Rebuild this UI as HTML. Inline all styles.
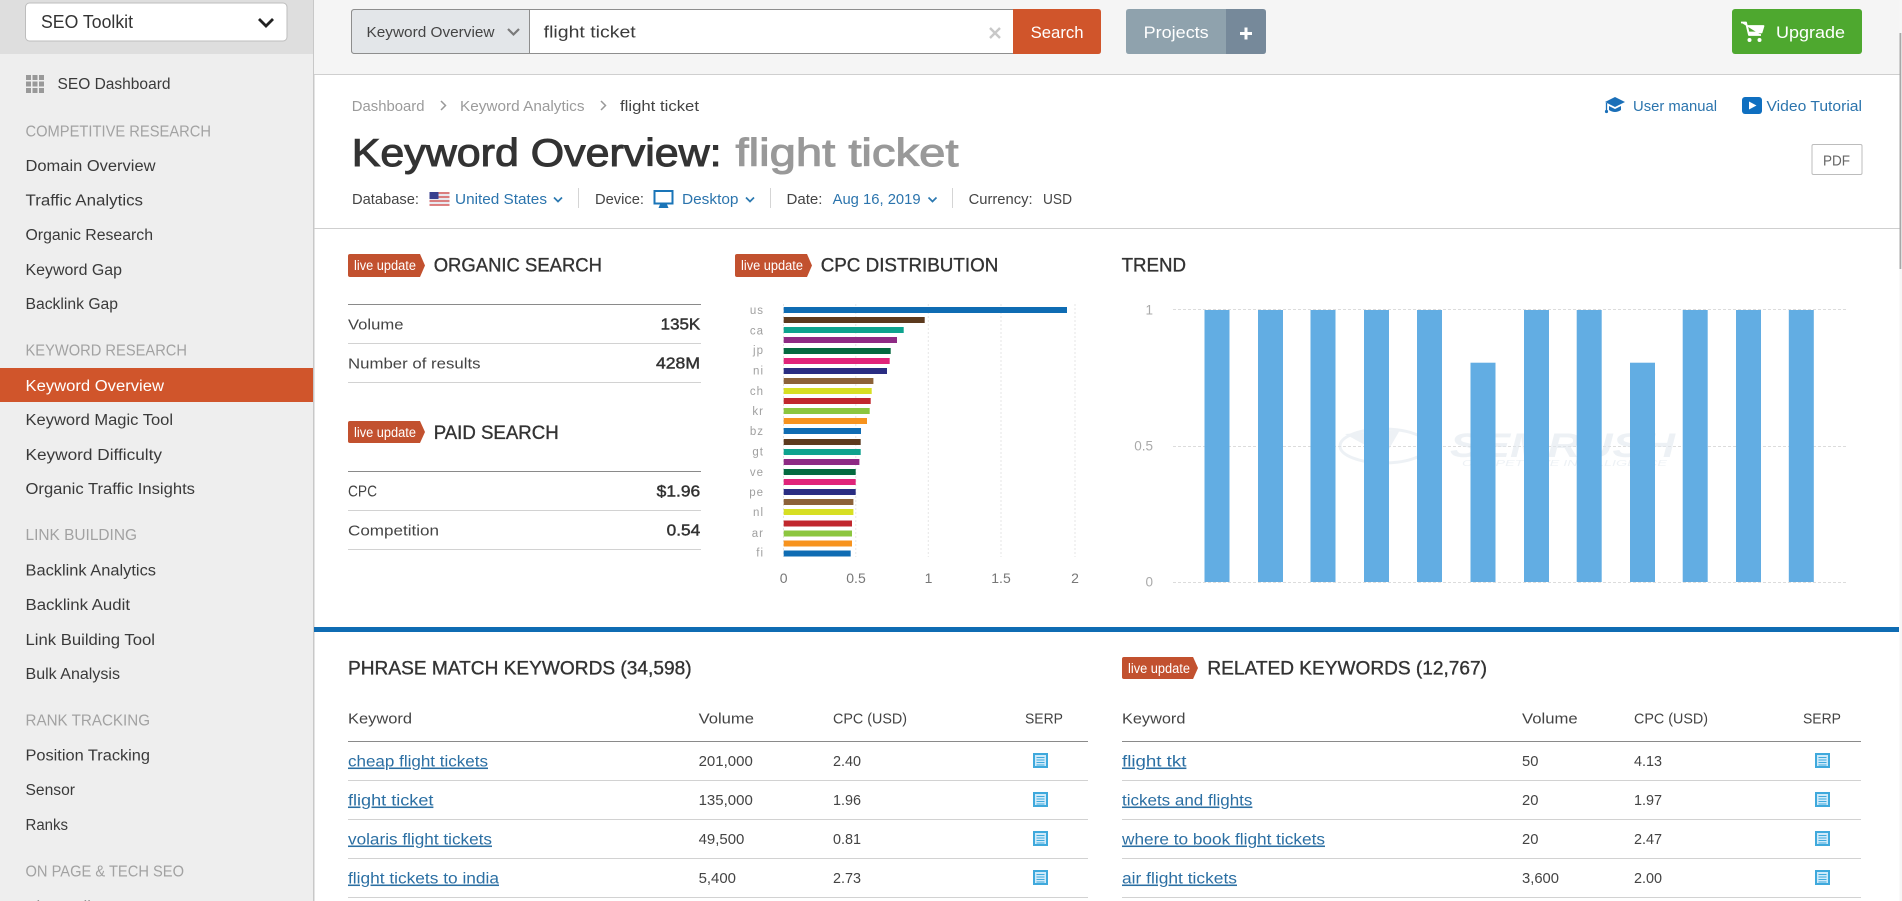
<!DOCTYPE html>
<html lang="en">
<head>
<meta charset="utf-8">
<title>Keyword Overview: flight ticket</title>
<style>
html,body{margin:0;padding:0;width:1902px;height:901px;overflow:hidden;background:#fff}
svg{display:block}
text{font-family:"Liberation Sans",sans-serif;font-size:15px;fill:#3c3c3c}
.s{font-size:15.5px;fill:#3a3a3a}
.c{font-size:15.5px;fill:#a2a2a2}
.h{font-size:19px;fill:#333;stroke:#333;stroke-width:.35px}
.l{font-size:13.5px;fill:#fff}
.g{fill:#9b9b9b}
.b{fill:#2b74ad}
.k{font-size:15px;fill:#444}
.v{font-size:15.5px;fill:#333;stroke:#333;stroke-width:.45px}
.w{fill:#fff;font-size:16.5px}
.t{font-size:39px;fill:#333;stroke:#333;stroke-width:1px}
.tg{font-size:39px;fill:#999;stroke:#999;stroke-width:1px}
.y{font-size:11.5px;fill:#a0a0a0;text-anchor:end}
.x{font-size:14px;fill:#777;text-anchor:middle}
.u{fill:#2b6fa3;text-decoration:underline;font-size:15.5px}
</style>
</head>
<body>
<svg width="1902" height="901" viewBox="0 0 1902 901" xmlns="http://www.w3.org/2000/svg">
<defs>
<symbol id="tag" viewBox="0 0 77 23" preserveAspectRatio="none"><path d="M2 0H72L77 11.500L72 23H2Q0 23 0 21V2Q0 0 2 0Z" fill="#c2512f"/></symbol>
<g id="doc"><rect x="0" y="0" width="15" height="15" fill="#3fa9dc"/><rect x="2" y="2" width="11" height="11" fill="#cfeafa"/><path d="M3.500 4.500H11.500M3.500 7H11.500M3.500 9.500H11.500M3.500 12H11.500" stroke="#3fa9dc" stroke-width="1"/></g>
<path id="chev" d="M-4 -2.500L0 1.500L4 -2.500" fill="none" stroke="#2b78b0" stroke-width="1.700"/>
</defs>

<!-- backgrounds -->
<rect width="1902" height="901" fill="#fff"/>
<rect x="0" y="0" width="313" height="901" fill="#eeeeee"/>
<rect x="0" y="0" width="313" height="54" fill="#dedede"/>
<rect x="313" y="0" width="1.500" height="901" fill="#c8c8c8"/>
<rect x="314" y="0" width="1588" height="74" fill="#f5f5f5"/>
<rect x="314" y="74" width="1586" height="1" fill="#cfcfcf"/>
<rect x="314" y="228" width="1586" height="1" fill="#cfcfcf"/>
<rect x="1899.500" y="0" width="2.500" height="901" fill="#f6f6f6"/>
<rect x="1899.500" y="33" width="1.800" height="236" fill="#a8a8a8"/>

<!-- sidebar -->
<rect x="25.500" y="3" width="261.500" height="38" rx="4" fill="#fff" stroke="#bdbdbd"/>
<text x="41" y="28" style="font-size:18px;fill:#333" textLength="92" lengthAdjust="spacingAndGlyphs">SEO Toolkit</text>
<path d="M259 19L266 26L273 19" fill="none" stroke="#222" stroke-width="2.800"/>
<g fill="#999">
<rect x="26" y="75" width="5" height="5"/><rect x="32.500" y="75" width="5" height="5"/><rect x="39" y="75" width="5" height="5"/>
<rect x="26" y="81.500" width="5" height="5"/><rect x="32.500" y="81.500" width="5" height="5"/><rect x="39" y="81.500" width="5" height="5"/>
<rect x="26" y="88" width="5" height="5"/><rect x="32.500" y="88" width="5" height="5"/><rect x="39" y="88" width="5" height="5"/>
</g>
<text class="s" x="57.500" y="89" textLength="113" lengthAdjust="spacingAndGlyphs">SEO Dashboard</text>
<text class="c" x="25.500" y="136.500" textLength="185.500" lengthAdjust="spacingAndGlyphs">COMPETITIVE RESEARCH</text>
<text class="s" x="25.500" y="171" textLength="130" lengthAdjust="spacingAndGlyphs">Domain Overview</text>
<text class="s" x="25.500" y="205.500" textLength="117.500" lengthAdjust="spacingAndGlyphs">Traffic Analytics</text>
<text class="s" x="25.500" y="240" textLength="127.500" lengthAdjust="spacingAndGlyphs">Organic Research</text>
<text class="s" x="25.500" y="275" textLength="96.500" lengthAdjust="spacingAndGlyphs">Keyword Gap</text>
<text class="s" x="25.500" y="309" textLength="92.500" lengthAdjust="spacingAndGlyphs">Backlink Gap</text>
<text class="c" x="25.500" y="355.500" textLength="161.500" lengthAdjust="spacingAndGlyphs">KEYWORD RESEARCH</text>
<rect x="0" y="368" width="313" height="34" fill="#d0552b"/>
<text class="s" style="fill:#fff" x="25.500" y="391" textLength="138.500" lengthAdjust="spacingAndGlyphs">Keyword Overview</text>
<text class="s" x="25.500" y="425" textLength="147.500" lengthAdjust="spacingAndGlyphs">Keyword Magic Tool</text>
<text class="s" x="25.500" y="460" textLength="136.500" lengthAdjust="spacingAndGlyphs">Keyword Difficulty</text>
<text class="s" x="25.500" y="494" textLength="169.500" lengthAdjust="spacingAndGlyphs">Organic Traffic Insights</text>
<text class="c" x="25.500" y="540" textLength="111.500" lengthAdjust="spacingAndGlyphs">LINK BUILDING</text>
<text class="s" x="25.500" y="575.500" textLength="130.500" lengthAdjust="spacingAndGlyphs">Backlink Analytics</text>
<text class="s" x="25.500" y="610" textLength="104.500" lengthAdjust="spacingAndGlyphs">Backlink Audit</text>
<text class="s" x="25.500" y="645" textLength="129.500" lengthAdjust="spacingAndGlyphs">Link Building Tool</text>
<text class="s" x="25.500" y="679" textLength="94.500" lengthAdjust="spacingAndGlyphs">Bulk Analysis</text>
<text class="c" x="25.500" y="725.500" textLength="124.500" lengthAdjust="spacingAndGlyphs">RANK TRACKING</text>
<text class="s" x="25.500" y="760.500" textLength="124.500" lengthAdjust="spacingAndGlyphs">Position Tracking</text>
<text class="s" x="25.500" y="795" textLength="49.500" lengthAdjust="spacingAndGlyphs">Sensor</text>
<text class="s" x="25.500" y="830" textLength="42.500" lengthAdjust="spacingAndGlyphs">Ranks</text>
<text class="c" x="25.500" y="876.500" textLength="158.500" lengthAdjust="spacingAndGlyphs">ON PAGE &amp; TECH SEO</text>
<text class="s" x="25.500" y="912" textLength="70" lengthAdjust="spacingAndGlyphs">Site Audit</text>

<!-- top bar -->
<rect x="351.500" y="9.500" width="680" height="44" rx="3" fill="#fff" stroke="#8e8e8e"/>
<path d="M351.500 12.500Q351.500 9.500 354.500 9.500H529.500V53.500H354.500Q351.500 53.500 351.500 50.500Z" fill="#e3e6e9" stroke="#8e8e8e"/>
<text x="366.500" y="37" style="font-size:14.500px;fill:#444" textLength="128" lengthAdjust="spacingAndGlyphs">Keyword Overview</text>
<path d="M508 29L513.500 34.500L519 29" fill="none" stroke="#7a7a7a" stroke-width="2.200"/>
<text x="543.700" y="37.500" style="font-size:17px;fill:#3a3a3a" textLength="92" lengthAdjust="spacingAndGlyphs">flight ticket</text>
<path d="M990 28L1000 38M1000 28L990 38" stroke="#c8c8c8" stroke-width="2.400"/>
<path d="M1013 9H1098Q1101 9 1101 12V51Q1101 54 1098 54H1013Z" fill="#d0552b"/>
<text class="w" x="1030.600" y="38" textLength="53" lengthAdjust="spacingAndGlyphs">Search</text>
<path d="M1129 9H1226V54H1129Q1126 54 1126 51V12Q1126 9 1129 9Z" fill="#8fa2ad"/>
<path d="M1226 9H1263Q1266 9 1266 12V51Q1266 54 1263 54H1226Z" fill="#76899a"/>
<text class="w" x="1143.700" y="38" textLength="65" lengthAdjust="spacingAndGlyphs">Projects</text>
<path d="M1246 27.500V39.500M1240 33.500H1252" stroke="#fff" stroke-width="3"/>
<rect x="1732" y="9" width="130" height="45" rx="3" fill="#4ea82f"/>
<path d="M1741 22.500H1746L1749 35H1761M1747 26H1763.500L1761.500 32.500H1748.500Z" fill="#fff" stroke="#fff" stroke-width="1.800" stroke-linejoin="round"/>
<circle cx="1749.500" cy="40" r="2" fill="#fff"/><circle cx="1759.500" cy="40" r="2" fill="#fff"/>
<text class="w" x="1776" y="38" textLength="69" lengthAdjust="spacingAndGlyphs">Upgrade</text>

<!-- page head -->
<text class="g" x="351.800" y="111" style="font-size:14.500px" textLength="72.700" lengthAdjust="spacingAndGlyphs">Dashboard</text>
<path d="M441 101L445.500 105.500L441 110" fill="none" stroke="#999" stroke-width="1.500"/>
<text class="g" x="460" y="111" style="font-size:14.500px" textLength="124.500" lengthAdjust="spacingAndGlyphs">Keyword Analytics</text>
<path d="M601 101L605.500 105.500L601 110" fill="none" stroke="#999" stroke-width="1.500"/>
<text x="620" y="111" style="font-size:14.500px;fill:#444" textLength="79" lengthAdjust="spacingAndGlyphs">flight ticket</text>
<text class="t" x="351.800" y="166" textLength="369.800" lengthAdjust="spacingAndGlyphs">Keyword Overview:</text>
<text class="tg" x="735.500" y="166" textLength="223" lengthAdjust="spacingAndGlyphs">flight ticket</text>

<text x="352" y="204" style="fill:#444" textLength="67" lengthAdjust="spacingAndGlyphs">Database:</text>
<rect x="429.500" y="192" width="20" height="13.500" fill="#e9e9ef"/>
<path d="M429.500 193H449.500M429.500 197H449.500M429.500 201H449.500M429.500 205H449.500" stroke="#d65a5a" stroke-width="1.500"/>
<rect x="429.500" y="192" width="9" height="7" fill="#39408f"/>
<text class="b" x="455" y="204" textLength="92" lengthAdjust="spacingAndGlyphs">United States</text>
<use href="#chev" x="558" y="200"/>
<rect x="578" y="188" width="1" height="20" fill="#d5d5d5"/>
<text x="595" y="204" style="fill:#444" textLength="49" lengthAdjust="spacingAndGlyphs">Device:</text>
<rect x="654.500" y="191" width="18" height="12.500" fill="#fff" stroke="#1a75b8" stroke-width="2"/>
<path d="M660 204.500H667L668.500 208H658.500Z" fill="#1a75b8"/>
<text class="b" x="682" y="204" textLength="56.500" lengthAdjust="spacingAndGlyphs">Desktop</text>
<use href="#chev" x="750" y="200"/>
<rect x="770" y="188" width="1" height="20" fill="#d5d5d5"/>
<text x="786.500" y="204" style="fill:#444" textLength="36" lengthAdjust="spacingAndGlyphs">Date:</text>
<text class="b" x="832.600" y="204" textLength="88" lengthAdjust="spacingAndGlyphs">Aug 16, 2019</text>
<use href="#chev" x="932.500" y="200"/>
<rect x="952" y="188" width="1" height="20" fill="#d5d5d5"/>
<text x="968.600" y="204" style="fill:#444" textLength="64" lengthAdjust="spacingAndGlyphs">Currency:</text>
<text x="1043" y="204" style="fill:#444" textLength="29" lengthAdjust="spacingAndGlyphs">USD</text>

<path d="M1605 102L1615 97L1625 102L1615 107Z" fill="#1a6fb8"/>
<path d="M1609 106V110Q1615 114 1621 110V106L1615 109Z" fill="#1a6fb8"/>
<path d="M1606.500 103V110" stroke="#1a6fb8" stroke-width="1.300"/><circle cx="1606.500" cy="111.500" r="1.600" fill="#1a6fb8"/>
<text class="b" x="1633" y="111" textLength="84" lengthAdjust="spacingAndGlyphs">User manual</text>
<rect x="1742" y="97" width="20" height="17" rx="3" fill="#0f6fc0"/>
<path d="M1749 101.500L1756.500 105.500L1749 109.500Z" fill="#fff"/>
<text class="b" x="1766.500" y="111" textLength="95.500" lengthAdjust="spacingAndGlyphs">Video Tutorial</text>
<rect x="1812" y="144.500" width="50" height="30" rx="1.500" fill="#fff" stroke="#bcbcbc"/>
<text x="1823" y="165.500" style="font-size:14.500px;fill:#666" textLength="27" lengthAdjust="spacingAndGlyphs">PDF</text>

<!-- organic search -->
<use href="#tag" x="348" y="254" width="77" height="23"/>
<text class="l" x="354" y="270" textLength="62" lengthAdjust="spacingAndGlyphs">live update</text>
<text class="h" x="433.700" y="271.500" textLength="168.300" lengthAdjust="spacingAndGlyphs">ORGANIC SEARCH</text>
<rect x="348" y="304" width="353" height="1" fill="#8a8a8a"/>
<rect x="348" y="343" width="353" height="1" fill="#d2d2d2"/>
<rect x="348" y="382" width="353" height="1" fill="#d2d2d2"/>
<text class="k" x="348" y="329.500" textLength="55.500" lengthAdjust="spacingAndGlyphs">Volume</text>
<text class="v" x="660.700" y="329.500" textLength="39.500" lengthAdjust="spacingAndGlyphs">135K</text>
<text class="k" x="348" y="368.500" textLength="132.500" lengthAdjust="spacingAndGlyphs">Number of results</text>
<text class="v" x="656" y="368.500" textLength="44" lengthAdjust="spacingAndGlyphs">428M</text>

<use href="#tag" x="348" y="421" width="77" height="22"/>
<text class="l" x="354" y="437" textLength="62" lengthAdjust="spacingAndGlyphs">live update</text>
<text class="h" x="433.700" y="439" textLength="125" lengthAdjust="spacingAndGlyphs">PAID SEARCH</text>
<rect x="348" y="471" width="353" height="1" fill="#8a8a8a"/>
<rect x="348" y="510" width="353" height="1" fill="#d2d2d2"/>
<rect x="348" y="549" width="353" height="1" fill="#d2d2d2"/>
<text class="k" style="font-size:16px" x="348" y="496.500" textLength="29" lengthAdjust="spacingAndGlyphs">CPC</text>
<text class="v" x="656.700" y="496.500" textLength="43.500" lengthAdjust="spacingAndGlyphs">$1.96</text>
<text class="k" x="348" y="535.500" textLength="91" lengthAdjust="spacingAndGlyphs">Competition</text>
<text class="v" x="666.700" y="535.500" textLength="33.500" lengthAdjust="spacingAndGlyphs">0.54</text>

<!-- CPC distribution -->
<use href="#tag" x="735" y="254" width="77" height="23"/>
<text class="l" x="741" y="270" textLength="62" lengthAdjust="spacingAndGlyphs">live update</text>
<text class="h" x="820.700" y="271.500" textLength="177.600" lengthAdjust="spacingAndGlyphs">CPC DISTRIBUTION</text>
<g stroke="#e6e6e6" stroke-dasharray="2 2" stroke-width="1">
<path d="M783.500 304V557M855.800 304V557M928.300 304V557M1001 304V557M1075 304V557"/>
</g>
<rect x="783.700" y="307" width="283.300" height="6" fill="#0f6cb3"/>
<rect x="783.700" y="317" width="141" height="6" fill="#5c3a1e"/>
<rect x="783.700" y="327" width="120" height="6" fill="#0ea38e"/>
<rect x="783.700" y="337" width="113.300" height="6" fill="#8e2a84"/>
<rect x="783.700" y="348" width="107" height="6" fill="#04693f"/>
<rect x="783.700" y="358" width="106" height="6" fill="#e0247a"/>
<rect x="783.700" y="368" width="103.300" height="6" fill="#2a2d82"/>
<rect x="783.700" y="378" width="89.700" height="6" fill="#8c6239"/>
<rect x="783.700" y="388" width="88" height="6" fill="#d7df23"/>
<rect x="783.700" y="398" width="87" height="6" fill="#c1272d"/>
<rect x="783.700" y="408" width="86" height="6" fill="#8cc63f"/>
<rect x="783.700" y="418" width="83.300" height="6" fill="#f7931e"/>
<rect x="783.700" y="428" width="77.300" height="6" fill="#0f6cb3"/>
<rect x="783.700" y="439" width="77" height="6" fill="#5c3a1e"/>
<rect x="783.700" y="449" width="77" height="6" fill="#0ea38e"/>
<rect x="783.700" y="459" width="75.700" height="6" fill="#8e2a84"/>
<rect x="783.700" y="469" width="72" height="6" fill="#04693f"/>
<rect x="783.700" y="479" width="72" height="6" fill="#e0247a"/>
<rect x="783.700" y="489" width="72" height="6" fill="#2a2d82"/>
<rect x="783.700" y="499" width="69.700" height="6" fill="#8c6239"/>
<rect x="783.700" y="509" width="69.700" height="6" fill="#d7df23"/>
<rect x="783.700" y="520.500" width="68.300" height="6" fill="#c1272d"/>
<rect x="783.700" y="530.500" width="68.300" height="6" fill="#8cc63f"/>
<rect x="783.700" y="540.500" width="68.300" height="6" fill="#f7931e"/>
<rect x="783.700" y="550.500" width="67" height="6" fill="#0f6cb3"/>
<text class="y" x="764" y="314" letter-spacing="1">us</text>
<text class="y" x="764" y="334.500" letter-spacing="1">ca</text>
<text class="y" x="764" y="354" letter-spacing="1">jp</text>
<text class="y" x="764" y="374.500" letter-spacing="1">ni</text>
<text class="y" x="764" y="395" letter-spacing="1">ch</text>
<text class="y" x="764" y="415" letter-spacing="1">kr</text>
<text class="y" x="764" y="435" letter-spacing="1">bz</text>
<text class="y" x="764" y="455.500" letter-spacing="1">gt</text>
<text class="y" x="764" y="476" letter-spacing="1">ve</text>
<text class="y" x="764" y="496" letter-spacing="1">pe</text>
<text class="y" x="764" y="516" letter-spacing="1">nl</text>
<text class="y" x="764" y="537" letter-spacing="1">ar</text>
<text class="y" x="764" y="556.500" letter-spacing="1">fi</text>
<text class="x" x="783.700" y="583">0</text>
<text class="x" x="856" y="583">0.5</text>
<text class="x" x="928.500" y="583">1</text>
<text class="x" x="1001" y="583">1.5</text>
<text class="x" x="1075" y="583">2</text>

<!-- trend -->
<text class="h" x="1121.600" y="271.500" textLength="64.400" lengthAdjust="spacingAndGlyphs">TREND</text>
<g stroke="#dcdcdc" stroke-dasharray="3 2" stroke-width="1">
<path d="M1173 309.500H1847M1173 446.500H1847M1173 582.500H1847"/>
</g>
<text x="1153" y="314.500" style="font-size:13.500px;fill:#aaa;text-anchor:end">1</text>
<text x="1153" y="450.500" style="font-size:13.500px;fill:#aaa;text-anchor:end">0.5</text>
<text x="1153" y="586.500" style="font-size:13.500px;fill:#aaa;text-anchor:end">0</text>
<g opacity="0.6">
<ellipse cx="1384" cy="446" rx="44" ry="17" fill="none" stroke="#e2e9ef" stroke-width="3"/>
<path d="M1345 434L1400 430L1385 456Z" fill="#e2e9ef"/>
<text x="1450" y="457" style="font-size:34px;font-weight:bold;font-style:italic;fill:#e2e9ef" textLength="225" lengthAdjust="spacingAndGlyphs">SEMRUSH</text>
<text x="1462" y="466" style="font-size:8px;font-style:italic;fill:#e2e9ef" textLength="205" lengthAdjust="spacingAndGlyphs">COMPETITIVE INTELLIGENCE</text>
</g>
<g fill="#62ade3">
<rect x="1204.500" y="310" width="25" height="272"/>
<rect x="1258" y="310" width="25" height="272"/>
<rect x="1310.500" y="310" width="25" height="272"/>
<rect x="1364" y="310" width="25" height="272"/>
<rect x="1417" y="310" width="25" height="272"/>
<rect x="1470.500" y="362.700" width="25" height="219.300"/>
<rect x="1524" y="310" width="25" height="272"/>
<rect x="1576.700" y="310" width="25" height="272"/>
<rect x="1630" y="362.700" width="25" height="219.300"/>
<rect x="1682.700" y="310" width="25" height="272"/>
<rect x="1736" y="310" width="25" height="272"/>
<rect x="1788.800" y="310" width="25" height="272"/>
</g>

<!-- blue separator -->
<rect x="314" y="627" width="1585" height="5" fill="#0f6cb3"/>

<!-- phrase match -->
<text class="h" x="348" y="674.500" textLength="343.600" lengthAdjust="spacingAndGlyphs">PHRASE MATCH KEYWORDS (34,598)</text>
<text class="k" x="348" y="723.500" textLength="64" lengthAdjust="spacingAndGlyphs">Keyword</text>
<text class="k" x="698.600" y="723.500" textLength="55.400" lengthAdjust="spacingAndGlyphs">Volume</text>
<text class="k" x="833" y="723.500" textLength="74" lengthAdjust="spacingAndGlyphs">CPC (USD)</text>
<text class="k" x="1025" y="723.500" textLength="38" lengthAdjust="spacingAndGlyphs">SERP</text>
<rect x="348" y="741" width="740" height="1" fill="#8a8a8a"/>
<rect x="348" y="780" width="740" height="1" fill="#d2d2d2"/>
<rect x="348" y="819" width="740" height="1" fill="#d2d2d2"/>
<rect x="348" y="858" width="740" height="1" fill="#d2d2d2"/>
<rect x="348" y="897" width="740" height="1" fill="#d2d2d2"/>

<text class="u" x="348" y="766.500" textLength="140" lengthAdjust="spacingAndGlyphs">cheap flight tickets</text>
<text class="k" x="698.600" y="766" textLength="54.200" lengthAdjust="spacingAndGlyphs">201,000</text>
<text class="k" x="833" y="766" textLength="28" lengthAdjust="spacingAndGlyphs">2.40</text>
<use href="#doc" x="1033" y="753"/>
<text class="u" x="348" y="805.500" textLength="85.400" lengthAdjust="spacingAndGlyphs">flight ticket</text>
<text class="k" x="698.600" y="805" textLength="54.200" lengthAdjust="spacingAndGlyphs">135,000</text>
<text class="k" x="833" y="805" textLength="28" lengthAdjust="spacingAndGlyphs">1.96</text>
<use href="#doc" x="1033" y="792"/>
<text class="u" x="348" y="844.500" textLength="144" lengthAdjust="spacingAndGlyphs">volaris flight tickets</text>
<text class="k" x="698.600" y="844" textLength="45.800" lengthAdjust="spacingAndGlyphs">49,500</text>
<text class="k" x="833" y="844" textLength="28" lengthAdjust="spacingAndGlyphs">0.81</text>
<use href="#doc" x="1033" y="831"/>
<text class="u" x="348" y="883.500" textLength="151" lengthAdjust="spacingAndGlyphs">flight tickets to india</text>
<text class="k" x="698.600" y="883" textLength="37.400" lengthAdjust="spacingAndGlyphs">5,400</text>
<text class="k" x="833" y="883" textLength="28" lengthAdjust="spacingAndGlyphs">2.73</text>
<use href="#doc" x="1033" y="870"/>

<!-- related -->
<use href="#tag" x="1122" y="657" width="76" height="22"/>
<text class="l" x="1128" y="673" textLength="62" lengthAdjust="spacingAndGlyphs">live update</text>
<text class="h" x="1207.400" y="674.500" textLength="279.600" lengthAdjust="spacingAndGlyphs">RELATED KEYWORDS (12,767)</text>
<text class="k" x="1122" y="723.500" textLength="63.400" lengthAdjust="spacingAndGlyphs">Keyword</text>
<text class="k" x="1522" y="723.500" textLength="55.700" lengthAdjust="spacingAndGlyphs">Volume</text>
<text class="k" x="1634" y="723.500" textLength="74" lengthAdjust="spacingAndGlyphs">CPC (USD)</text>
<text class="k" x="1803" y="723.500" textLength="38" lengthAdjust="spacingAndGlyphs">SERP</text>
<rect x="1122" y="741" width="739" height="1" fill="#8a8a8a"/>
<rect x="1122" y="780" width="739" height="1" fill="#d2d2d2"/>
<rect x="1122" y="819" width="739" height="1" fill="#d2d2d2"/>
<rect x="1122" y="858" width="739" height="1" fill="#d2d2d2"/>
<rect x="1122" y="897" width="739" height="1" fill="#d2d2d2"/>

<text class="u" x="1122" y="766.500" textLength="64.400" lengthAdjust="spacingAndGlyphs">flight tkt</text>
<text class="k" x="1522" y="766" textLength="16.400" lengthAdjust="spacingAndGlyphs">50</text>
<text class="k" x="1634" y="766" textLength="28" lengthAdjust="spacingAndGlyphs">4.13</text>
<use href="#doc" x="1815" y="753"/>
<text class="u" x="1122" y="805.500" textLength="130.400" lengthAdjust="spacingAndGlyphs">tickets and flights</text>
<text class="k" x="1522" y="805" textLength="16.400" lengthAdjust="spacingAndGlyphs">20</text>
<text class="k" x="1634" y="805" textLength="28" lengthAdjust="spacingAndGlyphs">1.97</text>
<use href="#doc" x="1815" y="792"/>
<text class="u" x="1122" y="844.500" textLength="203" lengthAdjust="spacingAndGlyphs">where to book flight tickets</text>
<text class="k" x="1522" y="844" textLength="16.400" lengthAdjust="spacingAndGlyphs">20</text>
<text class="k" x="1634" y="844" textLength="28" lengthAdjust="spacingAndGlyphs">2.47</text>
<use href="#doc" x="1815" y="831"/>
<text class="u" x="1122" y="883.500" textLength="115" lengthAdjust="spacingAndGlyphs">air flight tickets</text>
<text class="k" x="1522" y="883" textLength="37" lengthAdjust="spacingAndGlyphs">3,600</text>
<text class="k" x="1634" y="883" textLength="28" lengthAdjust="spacingAndGlyphs">2.00</text>
<use href="#doc" x="1815" y="870"/>
</svg>
</body>
</html>
